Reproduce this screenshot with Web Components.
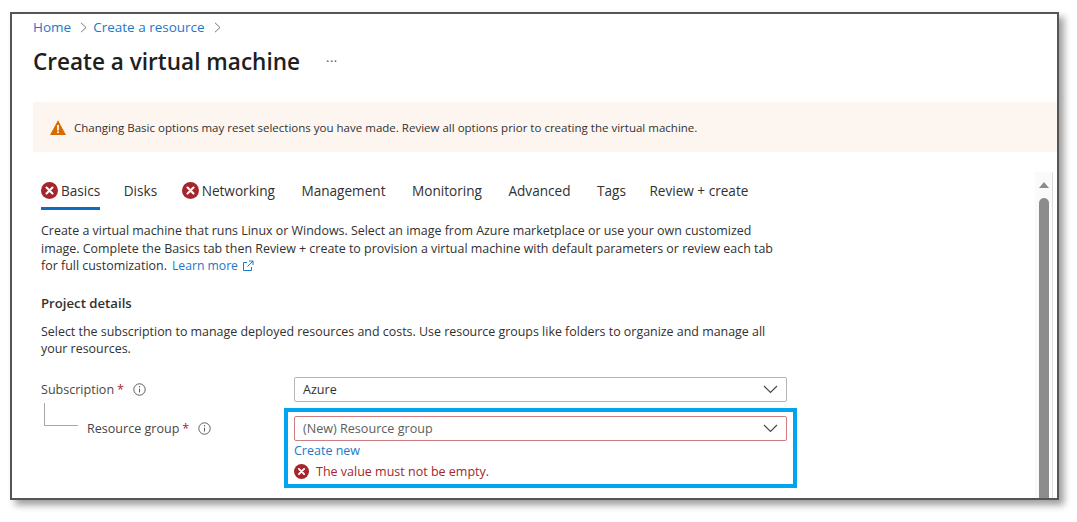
<!DOCTYPE html>
<html lang="en"><head><meta charset="utf-8"><title>Create a virtual machine</title>
<style>
html,body{margin:0;background:#fff;height:100%;overflow:hidden}
body{font-family:"Open Sans","Noto Sans",sans-serif;color:#323130;font-size:13.5px}
</style></head><body>
<vm-page></vm-page>
<script>
const X=(s=17)=>`<svg width="${s}" height="${s}" viewBox="0 0 16 16" aria-hidden="true"><circle cx="8" cy="8" r="8" fill="#a4262c"/><path d="M5.2 5.2l5.6 5.6M10.8 5.2l-5.6 5.6" stroke="#fff" stroke-width="2" stroke-linecap="round"/></svg>`;
const INFO=`<svg width="13" height="13" viewBox="0 0 13 13" aria-hidden="true"><circle cx="6.5" cy="6.5" r="5.7" fill="none" stroke="#605e5c"/><path d="M6.5 5.7v3.8" stroke="#605e5c"/><circle cx="6.5" cy="3.8" r=".7" fill="#605e5c"/></svg>`;
const CHEV=`<svg width="15" height="9" viewBox="0 0 15 9" aria-hidden="true"><path d="M1 1l6.5 6.5L14 1" fill="none" stroke="#4a4a4a" stroke-width="1.2"/></svg>`;
const GT=`<svg width="7" height="11" viewBox="0 0 7 11" aria-hidden="true"><path d="M1 .8l5 4.7-5 4.7" fill="none" stroke="#777" stroke-width="1"/></svg>`;
function def(name,html){customElements.define(name,class extends HTMLElement{connectedCallback(){if(this.shadowRoot)return;const r=this.attachShadow({mode:"open"});r.innerHTML=typeof html==="function"?html(this):html;}});}

def("vm-breadcrumb",`<style>:host{display:flex;align-items:center;height:20px;font-size:13.5px;color:#1b78c8}
span{margin-right:9px}svg{margin-right:6px}</style>
<span>Home</span>${GT}<span>Create a resource</span>${GT}`);

def("vm-title",`<style>:host{display:flex;align-items:center;margin-top:7px;height:36px}
h1{margin:0;font-size:22.55px;font-weight:600;color:#201f1e;line-height:36px}
i{font-style:normal;margin-left:26px;font-size:13px;color:#555;position:relative;top:-1px;letter-spacing:.5px}</style>
<h1><slot></slot></h1><i>···</i>`);

def("vm-banner",`<style>:host{display:flex;align-items:center;height:50px;background:#fdf6f0;padding-left:17px;margin-left:21px;font-size:11.53px;color:#323130;gap:8px}
svg{flex:none}</style>
<svg width="16" height="15" viewBox="0 0 16 15" aria-hidden="true"><path d="M8 .3L16 15H0z" fill="#d86b00"/><path d="M8 5v5.4" stroke="#fff" stroke-width="1.7"/><circle cx="8" cy="12.3" r="1" fill="#fff"/></svg><slot></slot>`);

def("vm-tab",h=>`<style>:host{display:flex;flex-direction:column;height:38px;box-sizing:border-box;font-size:13.6px;color:#323130}
.l{display:flex;align-items:center;gap:3px;height:35px;padding-top:1px;box-sizing:border-box}
.b{height:${h.hasAttribute("active")?2.5:0}px;background:#0f6cbd}</style>
<div class="l">${h.hasAttribute("error")?X():""}<slot></slot></div><div class="b"></div>`);

def("vm-tabs",`<style>:host{display:flex;gap:26.5px}</style><slot></slot>`);

def("vm-field-label",`<style>:host{display:flex;align-items:center;font-size:12.55px;color:#484644;gap:8.5px}
b{color:#a4262c;font-weight:400;margin-left:3px}</style>
<span><slot></slot><b>*</b></span>${INFO}`);

def("vm-select",h=>`<style>:host{display:flex;align-items:center;justify-content:space-between;box-sizing:border-box;width:493px;height:25px;
border:1px solid ${h.hasAttribute("invalid")?"#cf7c80":"#b5b5b5"};border-radius:2px;padding:0 8px;font-size:12.6px;color:${h.hasAttribute("invalid")?"#605e5c":"#323130"};background:#fff}</style>
<span><slot></slot></span>${CHEV}`);

def("vm-callout",`<style>:host{display:flex;flex-direction:column;box-sizing:border-box;width:513px;height:80px;border:4px solid #00a4ef;padding:4px 6px 0}
.new{color:#1b78c8;font-size:12.5px;line-height:20px}
.err{display:flex;align-items:center;gap:7px;color:#a4262c;font-size:12.5px;height:20px;margin-top:1px}</style>
<slot></slot>
<div class="new">Create new</div><div class="err">${X(15)}<span>The value must not be empty.</span></div>`);

def("vm-scrollbar",`<style>:host{display:flex;flex-direction:column;align-items:center;flex:none;width:18px;background:#fafafa;border-right:1px solid #ddd;margin-right:4px;margin-top:20px;box-sizing:border-box;padding-top:10px}
.up{width:0;height:0;border-left:5.5px solid transparent;border-right:5.5px solid transparent;border-bottom:6.5px solid #8c8c8c}
.th{flex:1;width:10px;margin-top:9.5px;background:#8c8c8c;border-radius:5px 5px 0 0}</style>
<div class="up"></div><div class="th"></div>`);

def("vm-page",`<style>
:host{box-sizing:border-box;width:1049px;height:488px;margin:12px 0 0 10px;border:2px solid #555;box-shadow:5px 5px 7px rgba(0,0,0,.38);overflow:hidden;background:#fff;display:flex;flex-direction:column}
.head{padding:3px 0 0 21px;height:88px;box-sizing:border-box;flex:none}
.row{display:flex;flex:1;min-height:0}
.main{flex:1;min-width:0;padding:20px 0 0 29px;overflow:hidden}
p{margin:0;font-size:12.43px;line-height:17.5px;color:#323130;width:745px}
p span{display:block}
.last{display:flex;align-items:center;gap:5px}
a{color:#1b78c8;display:flex;align-items:center;gap:4px;font-size:12.2px}
.intro{margin-top:12px}
h2{margin:19px 0 0;font-size:13.2px;font-weight:600;line-height:18px;color:#323130}
.sel{margin-top:11px}
.form{display:grid;grid-template-columns:253px auto;margin-top:19px;justify-content:start}
.lab{display:flex;align-items:center;height:25px}
.l2{position:relative;padding-left:46px;margin-top:14px}
.tree{position:absolute;left:3px;top:-13px;width:33px;height:22px;border-left:1px solid #a8a8a8;border-bottom:1px solid #a8a8a8}
.callout{margin:6px 0 0 -10px}
.t1{margin-right:-3px}.t2{margin-right:-2px}.t7{margin-right:-3px}
</style>
<div class="head"><vm-breadcrumb></vm-breadcrumb><vm-title>Create a virtual machine</vm-title></div>
<vm-banner>Changing Basic options may reset selections you have made. Review all options prior to creating the virtual machine.</vm-banner>
<div class="row"><div class="main">
<vm-tabs><vm-tab class="t1" active error>Basics</vm-tab><vm-tab class="t2">Disks</vm-tab><vm-tab error>Networking</vm-tab><vm-tab>Management</vm-tab><vm-tab>Monitoring</vm-tab><vm-tab>Advanced</vm-tab><vm-tab class="t7">Tags</vm-tab><vm-tab>Review + create</vm-tab></vm-tabs>
<p class="intro"><span>Create a virtual machine that runs Linux or Windows. Select an image from Azure marketplace or use your own customized image. Complete the Basics tab then Review + create to provision a virtual machine with default parameters or review each tab</span><span class="last"><span>for full customization.</span><a>Learn more <svg width="12" height="12" viewBox="0 0 12 12" aria-hidden="true"><path d="M9.5 7v3.5h-8v-8H5M7 1h4v4M11 1L5.5 6.5" fill="none" stroke="#1b78c8"/></svg></a></span></p>
<h2>Project details</h2>
<p class="sel">Select the subscription to manage deployed resources and costs. Use resource groups like folders to organize and manage all your resources.</p>
<div class="form">
<div class="lab"><vm-field-label>Subscription</vm-field-label></div><vm-select>Azure</vm-select>
<div class="lab l2"><span class="tree"></span><vm-field-label>Resource group</vm-field-label></div>
<div class="callout"><vm-callout><vm-select invalid>(New) Resource group</vm-select></vm-callout></div>
</div>
</div><vm-scrollbar></vm-scrollbar></div>`);
</script>
</body></html>
